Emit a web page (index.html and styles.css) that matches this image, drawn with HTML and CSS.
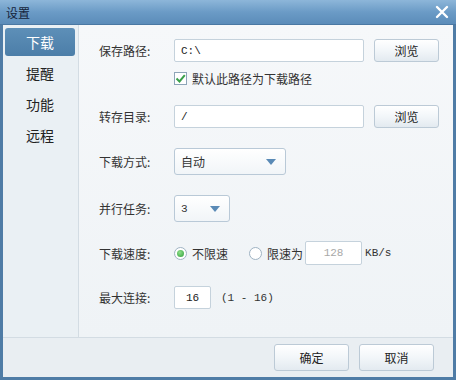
FILE: index.html
```html
<!DOCTYPE html>
<html lang="zh-CN">
<head>
    <meta charset="UTF-8">
    <title>设置</title>
    <link rel="stylesheet" href="styles.css">
</head>
<body>
    <div class="window">
        <div class="titlebar">
            <span class="title">设置</span>
            <svg class="close" width="14" height="14" viewBox="0 0 14 14">
                <path d="M2 2 L12 12 M12 2 L2 12" stroke="#fff" stroke-width="2.4" stroke-linecap="round"/>
            </svg>
        </div>
        <div class="main">
            <!-- 左侧菜单 -->
            <ul class="sidebar">
                <li class="active">下载</li>
                <li>提醒</li>
                <li>功能</li>
                <li>远程</li>
            </ul>
            <div class="content">
                <div class="row row-path">
                    <span class="label">保存路径:</span>
                    <input type="text" class="field wide mono" value="C:\">
                    <button class="btn browse">浏览</button>
                </div>
                <div class="row row-check">
                    <span class="checkbox">
                        <svg width="11" height="11" viewBox="0 0 11 11"><path d="M1.5 5.5 L4.5 8.5 L9.8 2.2" fill="none" stroke="#3aa04a" stroke-width="2"/></svg>
                    </span>
                    <span>默认此路径为下载路径</span>
                </div>
                <div class="row row-dir">
                    <span class="label">转存目录:</span>
                    <input type="text" class="field wide mono" value="/">
                    <button class="btn browse">浏览</button>
                </div>
                <div class="row row-mode">
                    <span class="label">下载方式:</span>
                    <div class="select mode"><span>自动</span><i class="arrow"></i></div>
                </div>
                <div class="row row-tasks">
                    <span class="label">并行任务:</span>
                    <div class="select tasks"><span class="mono">3</span><i class="arrow"></i></div>
                </div>
                <div class="row row-speed">
                    <span class="label">下载速度:</span>
                    <span class="radio checked"></span>
                    <span class="opt first">不限速</span>
                    <span class="radio"></span>
                    <span class="opt">限速为</span>
                    <input type="text" class="field speed mono" value="128" disabled>
                    <span class="mono unit">KB/s</span>
                </div>
                <div class="row row-conn">
                    <span class="label">最大连接:</span>
                    <input type="text" class="field conn mono" value="16">
                    <span class="mono range">(1 - 16)</span>
                </div>
            </div>
        </div>
        <div class="footer">
            <button class="btn action">确定</button>
            <button class="btn action">取消</button>
        </div>
    </div>
</body>
</html>
```

FILE: styles.css
```css
body {
    margin: 0;
    padding: 0;
    font-family: 'Noto Sans CJK SC', 'Noto Sans', sans-serif;
    font-size: 12px;
    color: #333;
    background: #fff;
}
.window {
    width: 456px;
    height: 380px;
    box-sizing: border-box;
    border: 3px solid #4f7ca6;
    border-top: 0;
    display: flex;
    flex-direction: column;
    background: #f3f6f9;
}
.titlebar {
    height: 25px;
    margin: 0 -3px;
    padding: 0 7px 0 6px;
    display: flex;
    align-items: center;
    justify-content: space-between;
    background: linear-gradient(#8db6d9, #6b9bc6 50%, #5b8cb9);
    border-bottom: 1px solid #4a78a3;
    box-sizing: border-box;
}
.title {
    font-size: 12px;
    color: #14233a;
}
.close {
    display: block;
}
.main {
    flex: 1;
    display: flex;
    min-height: 0;
}
.sidebar {
    list-style: none;
    margin: 0;
    padding: 3px 0 0 2px;
    width: 76px;
    box-sizing: border-box;
    background: #eaf0f4;
    border-right: 1px solid #d3dce3;
}
.sidebar li {
    width: 70px;
    height: 28px;
    line-height: 28px;
    margin-bottom: 3px;
    text-align: center;
    font-size: 14px;
    color: #222;
    border-radius: 3px;
}
.sidebar li.active {
    background: linear-gradient(#5d8fb8, #4c7ea8);
    color: #fff;
}
.content {
    flex: 1;
    padding: 14px 0 0 20px;
    background: linear-gradient(#f6f8fa, #eff3f6);
}
.row {
    display: flex;
    align-items: center;
}
.label {
    width: 75px;
    flex-shrink: 0;
}
.mono {
    font-family: 'Liberation Mono', 'DejaVu Sans Mono', monospace;
    font-size: 11px;
}
.field {
    box-sizing: border-box;
    border: 1px solid #c5d2dc;
    border-radius: 2px;
    background: #fff;
    padding: 0 6px;
    color: #222;
    outline: none;
}
.wide {
    width: 190px;
    height: 23px;
}
.btn {
    font-family: 'Noto Sans CJK SC', sans-serif;
    font-size: 12px;
    color: #222;
    border: 1px solid #bccad6;
    border-radius: 3px;
    background: linear-gradient(#ffffff, #f2f6f9 50%, #e3eaf0);
    padding: 0;
}
.browse {
    width: 65px;
    height: 23px;
    margin-left: 10px;
}
.row-path {
    height: 23px;
}
.row-check {
    margin-top: 9px;
    height: 15px;
    padding-left: 75px;
}
.checkbox {
    width: 13px;
    height: 13px;
    box-sizing: border-box;
    border: 1px solid #8ea5b8;
    background: #fff;
    display: flex;
    align-items: center;
    justify-content: center;
    margin-right: 5px;
}
.row-dir {
    margin-top: 19px;
    height: 23px;
}
.select {
    box-sizing: border-box;
    height: 27px;
    border: 1px solid #b9c9d7;
    border-radius: 3px;
    background: linear-gradient(#ffffff, #f1f5f8);
    display: flex;
    align-items: center;
    justify-content: space-between;
    padding: 0 9px 0 6px;
}
.arrow {
    width: 0;
    height: 0;
    border-left: 5px solid transparent;
    border-right: 5px solid transparent;
    border-top: 6px solid #5a8ab6;
}
.mode {
    width: 112px;
}
.tasks {
    width: 56px;
}
.row-mode {
    margin-top: 20px;
    height: 27px;
}
.row-tasks {
    margin-top: 20px;
    height: 27px;
}
.row-speed {
    margin-top: 19px;
    height: 24px;
}
.radio {
    width: 13px;
    height: 13px;
    box-sizing: border-box;
    border: 1px solid #9fb3c3;
    border-radius: 50%;
    background: #fff;
    position: relative;
    margin-right: 5px;
}
.radio.checked::after {
    content: "";
    position: absolute;
    left: 2px;
    top: 2px;
    width: 7px;
    height: 7px;
    border-radius: 50%;
    background: radial-gradient(circle at 40% 35%, #8fe08a, #2f9e3a);
}
.opt {
    margin-right: 2px;
}
.opt.first {
    margin-right: 21px;
}
.speed {
    width: 57px;
    height: 24px;
    text-align: center;
    color: #a8a8a8;
    background: #fff;
}
.unit {
    margin-left: 3px;
}
.row-conn {
    margin-top: 21px;
    height: 23px;
}
.conn {
    width: 37px;
    height: 23px;
    text-align: center;
}
.range {
    margin-left: 10px;
}
.footer {
    height: 40px;
    box-sizing: border-box;
    border-top: 1px solid #d3dce3;
    background: #e9eef2;
    display: flex;
    justify-content: flex-end;
    align-items: center;
    gap: 10px;
    padding: 0 19px 1px 0;
}
.action {
    width: 75px;
    height: 27px;
}
```
